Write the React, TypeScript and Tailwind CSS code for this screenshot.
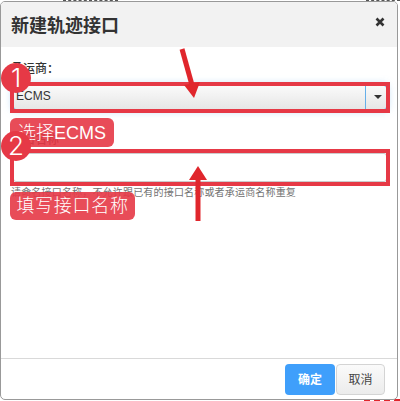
import React from 'react';

const Badge: React.FC<{ n: string; className: string }> = ({ n, className }) => (
  <div
    className={`absolute w-[30px] h-[30px] rounded-full bg-[#e63946] text-white flex items-center justify-center text-[26px] leading-none font-['Inter',sans-serif] font-light ${className}`}
  >
    {n}
  </div>
);

const Tag: React.FC<{ text: string; className: string }> = ({ text, className }) => (
  <div
    className={`absolute rounded-[6px] bg-[#e63946]/90 text-white flex items-center justify-center text-[18px] leading-none font-light ${className}`}
  >
    {text}
  </div>
);

const App: React.FC = () => {
  return (
    <div className="relative w-[400px] h-[401px] overflow-hidden bg-white font-['Liberation_Sans','Noto_Sans_CJK_SC',sans-serif]">
      {/* bits of the page behind the modal */}
      <div className="absolute left-[63px] top-0 w-[55px] border-t border-dashed border-[#555]" />
      <div className="absolute left-[366px] top-0 w-[34px] border-t border-dashed border-[#555]" />
      <div className="absolute left-[364px] top-[399px] w-[36px] border-t-2 border-dashed border-[#e0262c]" />

      {/* modal */}
      <div className="absolute left-0 top-[1px] w-[398px] h-[399px] rounded-[5px] border border-[#999] bg-white flex flex-col overflow-hidden">
        <div className="h-[45px] shrink-0 bg-[#f2f2f2] flex items-center justify-between pl-[10px] pr-[12px]">
          <span className="text-[18px] leading-[25px] mt-[3px] font-bold text-[#333]">新建轨迹接口</span>
          <svg width="10" height="10" viewBox="0 0 10 10" className="mb-[6px]">
            <path d="M1.5 1.5L8.5 8.5M8.5 1.5L1.5 8.5" stroke="#333" strokeWidth="2.6" />
          </svg>
        </div>

        <div className="flex-1 pl-[10px] pr-[10px] pt-[14px]">
          <div className="text-[12px] leading-[17px] text-[#333] font-medium">承运商：</div>
          <div className="mt-[7px] ml-[2px] h-[25px] flex border border-[#66afe9] rounded-[3px] bg-gradient-to-b from-[#fafafa] to-[#e6e6e6] shadow-[0_0_8px_rgba(102,175,233,0.6)]">
            <div className="flex-1 pl-[2px] text-[12px] leading-[21px] text-[#333]">ECMS</div>
            <div className="w-[21px] border-l border-[#66afe9] flex items-center justify-center pl-[3px] pb-[2px]">
              <div className="w-0 h-0 border-x-[4px] border-x-transparent border-t-[4px] border-t-[#333]" />
            </div>
          </div>

          <div className="mt-[22px] text-[12px] leading-[17px] text-[#333] font-medium">接口名称</div>
          <input className="block mt-[4px] ml-[2px] w-[374px] h-[29px] border border-[#ccc] rounded-[3px] bg-white" />
          <div className="mt-[4px] text-[10px] leading-[13px] tracking-[0.18px] text-[#737373] whitespace-nowrap">
            请命名接口名称，不允许跟已有的接口名称或者承运商名称重复
          </div>
        </div>

        <div className="h-[41px] shrink-0 border-t border-[#d9d9d9] flex items-start justify-end gap-[1px] pt-[5px] pr-[12px]">
          <button className="w-[50px] h-[31px] rounded-[4px] bg-[#3f9ffb] text-white text-[12px] font-bold">确定</button>
          <button className="w-[49px] h-[31px] rounded-[4px] border border-[#d4d4d4] bg-gradient-to-b from-[#fafafa] to-[#ececec] text-[#444] text-[12px]">取消</button>
        </div>
      </div>

      {/* annotations */}
      <div className="absolute left-[10px] top-[82px] w-[380px] h-[31px] border-[4px] border-[#e63946]" />
      <div className="absolute left-[10px] top-[149px] w-[380px] h-[37px] border-[4px] border-[#e63946]" />
      <Tag text="选择ECMS" className="left-[10px] top-[118px] w-[104px] h-[29px]" />
      <Tag text="填写接口名称" className="left-[10px] top-[192px] w-[125px] h-[28px] tracking-[0.7px]" />
      <Badge n="1" className="left-[1px] top-[63px]" />
      <Badge n="2" className="left-[1px] top-[131px]" />
      <svg className="absolute left-[175px] top-[45px]" width="35" height="176" viewBox="0 0 35 176">
        <path d="M7 4L17 40" stroke="#e0262c" strokeWidth="5" />
        <path d="M9 40L25 37L19 53Z" fill="#e0262c" />
        <path d="M23 130V176" stroke="#e0262c" strokeWidth="5" />
        <path d="M23 121L32 135H14Z" fill="#e0262c" />
      </svg>
    </div>
  );
};

export default App;
